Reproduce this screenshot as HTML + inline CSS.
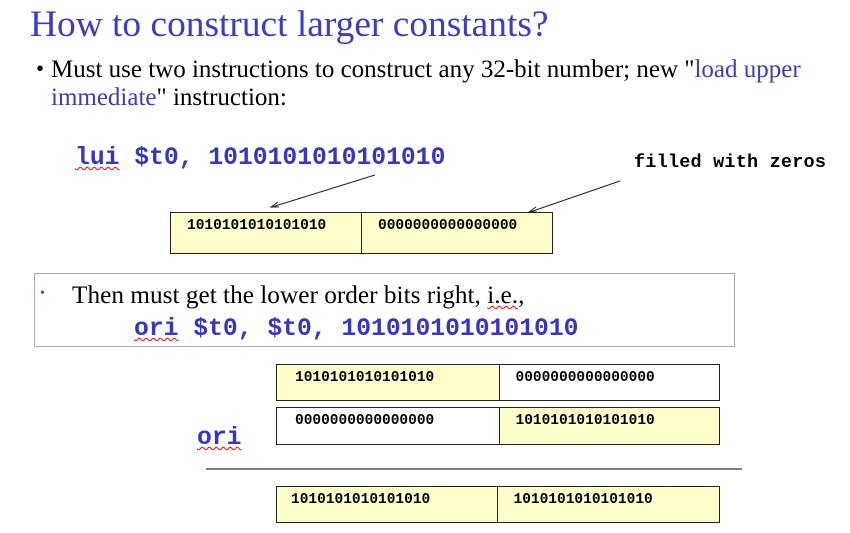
<!DOCTYPE html>
<html><head><style>
body{margin:0;width:850px;height:533px;background:#fff;position:relative;overflow:hidden;font-family:"Liberation Serif",serif}
.a{position:absolute;white-space:nowrap}
.code{font-family:"Liberation Mono",monospace;font-weight:bold;color:#3535c8}
.sq{text-decoration:underline wavy red;text-decoration-thickness:1px;text-underline-offset:2px}
.box{position:absolute;border:1.5px solid #222;display:flex;box-sizing:border-box}
.box div{flex:1;box-sizing:border-box;font-family:"Liberation Mono",monospace;font-weight:bold;font-size:14.5px;padding:5px 0 0 16px}
.y{background:#ffffcc}
</style></head><body>
<div class="a" style="left:30px;top:3px;font-size:37.4px;color:#3b3bcc">How to construct larger constants?</div>
<div class="a" style="left:36px;top:56px;font-size:23px">•</div>
<div class="a" style="left:51px;top:56px;font-size:25px;line-height:28px;letter-spacing:0px">Must use two instructions to construct any 32-bit number; new "<span style="color:#3b3bcc">load upper</span><br><span style="color:#3b3bcc">immediate</span>" instruction:</div>
<div class="a code" style="left:75px;top:144px;font-size:24.7px"><span class="sq">lui</span> $t0, 1010101010101010</div>
<div class="a" style="left:634px;top:152px;font-family:'Liberation Mono',monospace;font-weight:bold;font-size:18.5px;letter-spacing:0.2px">filled with zeros</div>
<svg class="a" style="left:0;top:0" width="850" height="533">
<line x1="375" y1="175" x2="272" y2="207" stroke="#222" stroke-width="1"/>
<path d="M278 202 L271 207 L279 207" fill="none" stroke="#222"/>
<line x1="620" y1="181" x2="530" y2="212" stroke="#222" stroke-width="1"/>
<path d="M536 207 L529 212 L537 212" fill="none" stroke="#222"/>
<line x1="206" y1="469" x2="742" y2="469" stroke="#333" stroke-width="1.3"/>
</svg>
<div class="box" style="left:170px;top:212px;width:383px;height:42px"><div class="y" style="border-right:1.5px solid #222">1010101010101010</div><div class="y">0000000000000000</div></div>
<div class="a" style="left:34px;top:273px;width:699px;height:72px;border:1px solid #aaa"></div>
<div class="a" style="left:40px;top:286px;font-size:14px;color:#a020a0">•</div>
<div class="a" style="left:72px;top:281px;font-size:25.3px;letter-spacing:0px">Then must get the lower order bits right, <span class="sq">i.e.</span>,</div>
<div class="a code" style="left:134px;top:315px;font-size:24.7px"><span class="sq">ori</span> $t0, $t0, 1010101010101010</div>
<div class="box" style="left:276px;top:364px;width:444px;height:37px"><div class="y" style="border-right:1.5px solid #222;padding-left:18px">1010101010101010</div><div style="padding-left:16px">0000000000000000</div></div>
<div class="box" style="left:276px;top:407px;width:444px;height:38px"><div style="border-right:1.5px solid #222;padding-left:18px">0000000000000000</div><div class="y" style="padding-left:16px">1010101010101010</div></div>
<div class="a code" style="left:197px;top:424px;font-size:24.7px"><span class="sq">ori</span></div>
<div class="box" style="left:276px;top:486px;width:444px;height:37px"><div class="y" style="border-right:1.5px solid #222;padding-left:14px">1010101010101010</div><div class="y" style="padding-left:16px">1010101010101010</div></div>
</body></html>
